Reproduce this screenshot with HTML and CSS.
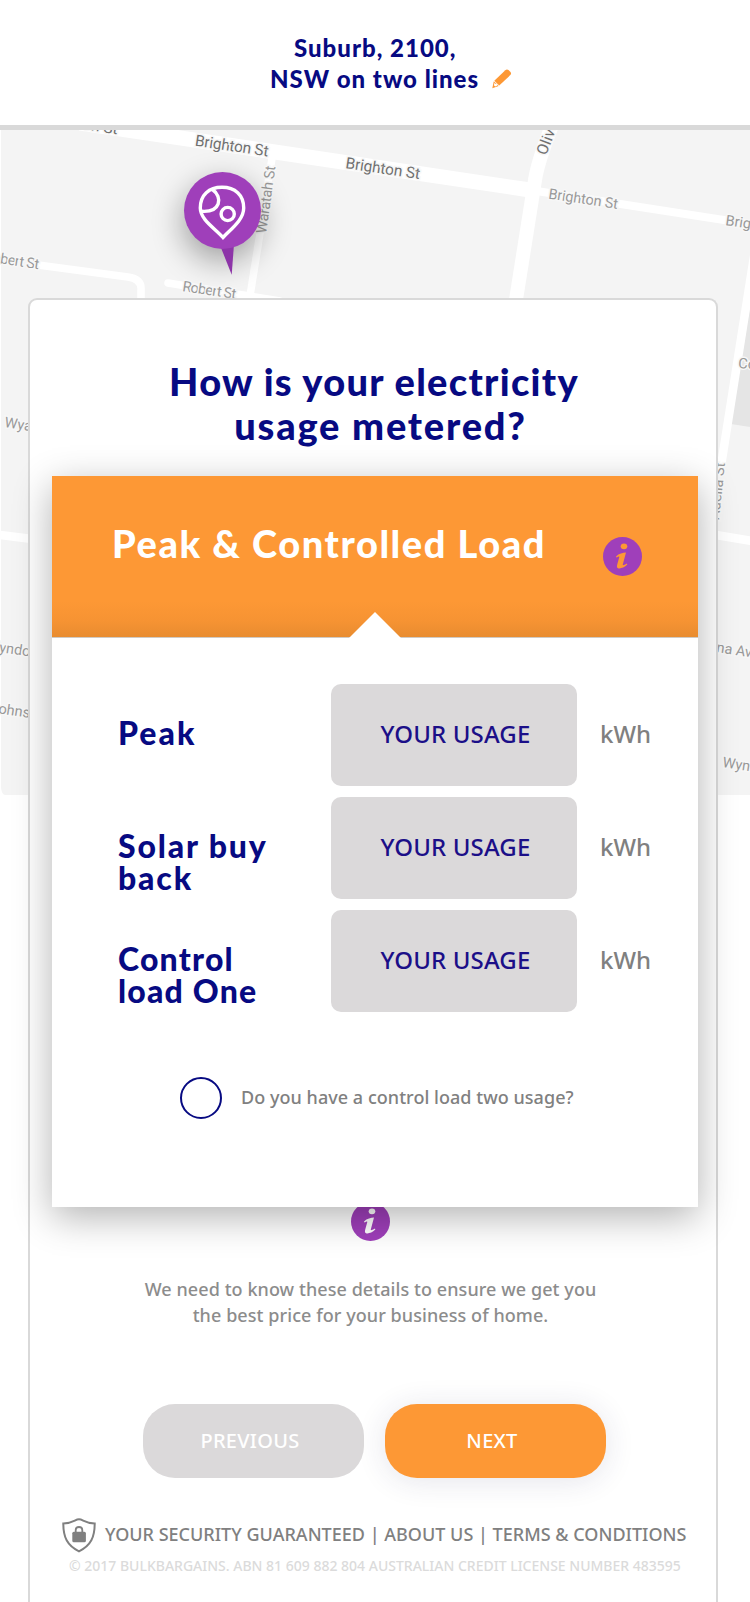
FILE: index.html
```html
<!DOCTYPE html>
<html lang="en">
<head>
<meta charset="utf-8">
<title>BulkBargains – Electricity usage</title>
<link rel="stylesheet" href="styles.css">
</head>
<body>
<div class="page">
  <header class="header">
    <p class="suburb"><span class="suburb-line one">Suburb, 2100,</span><span class="suburb-line two">NSW on two lines</span></p>
    <svg class="pencil" width="20" height="20" viewBox="0 0 20 20"><path fill="#fd9835" d="M13.300 1.200Q14.800-.200 16.500 1L18.500 3Q19.700 4.600 18.300 6.100L7.200 16.500 2.300 11.800Z"/><path fill="#fd9835" fill-rule="evenodd" d="M1.800 12.300 6.700 17.100.300 19.300ZM2.600 13.800 1.900 16.200 3.200 17.400 5.400 16.600 5 14.900 3.600 15Z"/></svg>
  </header>

  <svg class="map" width="750" height="665" viewBox="0 130 750 665">
    <path d="M1 130H750V795H5Q2 795 1 788Z" fill="#f4f4f4"/>
    <path d="M750 306V427L731 424Z" fill="#e5e5e5"/>
    <g fill="none" stroke="#fff">
      <path d="M80 123 530 190" stroke-width="15"/>
      <path d="M530 190 750 224" stroke-width="8"/>
      <path d="M555 118Q538 160 535 180L515 306" stroke-width="14" />
      <path d="M273 152 249 302M38 265 128 277Q142 279 141 290V302M168 283 280 301" stroke-width="7.500" stroke-linecap="round"/>
      <path d="M755 250 721 466M0 535 32 539M716 535 752 541" stroke-width="8.500"/>
    </g>
    <g class="street strong">
      <text transform="translate(82 129) rotate(8.500)">on St</text>
      <text transform="translate(194.500 145.500) rotate(8.500)" textLength="74">Brighton St</text>
      <text transform="translate(345 168) rotate(8.500)" textLength="75">Brighton St</text>
      <text transform="translate(546 156) rotate(-69)" textLength="35">Olive</text>
    </g>
    <g class="street">
      <text transform="translate(548 198.500) rotate(8.500)" textLength="70">Brighton St</text>
      <text transform="translate(725 225) rotate(8.500)">Brighton St</text>
      <text transform="translate(266 234) rotate(-82)" textLength="68">Waratah St</text>
      <text transform="translate(-16 261) rotate(8.500)" textLength="55">Robert St</text>
      <text transform="translate(182 291) rotate(8.500)" textLength="54">Robert St</text>
      <text transform="translate(4 427) rotate(8.500)">Wyatt Ave</text>
      <text transform="translate(-14 650) rotate(8.500)" textLength="84">Wyndora Ave</text>
      <text transform="translate(-10 712) rotate(8.500)">Johnson St</text>
      <text transform="translate(738 368) rotate(4)">Corner</text>
      <text transform="translate(725 463) rotate(-84)" text-anchor="end">Adelia St</text>
      <text transform="translate(716 652) rotate(8.500)">na Ave</text>
      <text transform="translate(722 767) rotate(8.500)">Wyndora</text>
    </g>
    <circle class="pin-shadow" cx="222" cy="222" r="39"/>
    <path d="M219.500 244H234L231.700 274.700Z" fill="#8d34a8"/>
    <circle cx="222.500" cy="210.500" r="38.500" fill="#9f3fba"/>
    <g fill="none" stroke="#fff" stroke-width="3.400">
      <path d="M223 237.500C216 229 200.300 220 200.300 208 200.300 195 209 187.300 222 187.300S243.700 195 243.700 208C243.700 220 231 229 223 237.500Z"/>
      <path d="M212.500 189.500C223 197 221 213 200.800 211.200"/>
      <circle cx="227.700" cy="214" r="6.600"/>
    </g>
  </svg>

  <main class="card">
    <h1 class="title"><span class="title-one">How is your electricity</span><br><span class="title-two">usage metered?</span></h1>

    <section class="panel">
      <div class="panel-head">
        <h2 class="panel-title">Peak &amp; Controlled Load</h2>
        <svg class="info" width="39" height="39" viewBox="0 0 39 39"><circle cx="19.500" cy="19.500" r="19.500" fill="#9f3fba"/><g fill="#fd9835"><ellipse cx="21" cy="9.300" rx="3.300" ry="2.900"/><path d="M13 19.500C16 16.500 20 15.500 23 15.500L19.800 27.500C19.500 29 21 28 24 26.600L24.300 27.600C21 31 17 31.900 15 31.200 13.300 30.500 14 28.500 14.500 26.500L16.300 20C16.500 18.800 15 19.800 13.500 20.500Z"/></g></svg>
        <span class="pointer"></span>
      </div>
      <div class="rows">
        <div class="row"><label class="name">Peak</label><div class="usage">YOUR USAGE</div><span class="unit">kWh</span></div>
        <div class="row"><label class="name solar">Solar buy<br>back</label><div class="usage">YOUR USAGE</div><span class="unit">kWh</span></div>
        <div class="row"><label class="name control">Control<br>load One</label><div class="usage">YOUR USAGE</div><span class="unit">kWh</span></div>
      </div>
      <div class="option"><span class="radio"></span><span class="question">Do you have a control load two usage?</span></div>
    </section>

    <svg class="info lower" width="39" height="39" viewBox="0 0 39 39"><circle cx="19.500" cy="19.500" r="19.500" fill="#9f3fba"/><g fill="#fff"><ellipse cx="21" cy="9.300" rx="3.300" ry="2.900"/><path d="M13 19.500C16 16.500 20 15.500 23 15.500L19.800 27.500C19.500 29 21 28 24 26.600L24.300 27.600C21 31 17 31.900 15 31.200 13.300 30.500 14 28.500 14.500 26.500L16.300 20C16.500 18.800 15 19.800 13.500 20.500Z"/></g></svg>

    <p class="note">We need to know these details to ensure we get you<br>the best price for your business of home.</p>

    <div class="actions">
      <button class="btn previous">PREVIOUS</button>
      <button class="btn next">NEXT</button>
    </div>

    <footer class="footer">
      <div class="links">
        <svg class="shield" width="34" height="35" viewBox="0 0 34 35"><path d="M17 1.300C13 1.300 11.500 5.300 1.300 5.500 1.300 19 5 27.500 17 33.300 29 27.500 32.700 19 32.700 5.500 22.500 5.300 21 1.300 17 1.300Z" fill="none" stroke="#808080" stroke-width="2"/><rect x="10.300" y="13.800" width="13.600" height="10.500" rx="1.500" fill="#808080"/><path d="M13.700 14V12Q13.700 9 17 9T20.300 12V14" fill="none" stroke="#808080" stroke-width="1.800"/></svg>
        <span class="links-text">YOUR SECURITY GUARANTEED | ABOUT US | TERMS &amp; CONDITIONS</span>
      </div>
      <p class="legal">© 2017 BULKBARGAINS. ABN 81 609 882 804 AUSTRALIAN CREDIT LICENSE NUMBER 483595</p>
    </footer>
  </main>
</div>
</body>
</html>
```
FILE: styles.css
```css
* { box-sizing: border-box; }
body, p, h1, h2 { margin: 0; }
body { background: #fff; font-family: "Noto Sans", "Open Sans", sans-serif; }
.page { position: relative; width: 750px; height: 1602px; overflow: hidden; }

.header {
  display: flex;
  height: 130px;
  padding: 32px 0 0 270px;
  border-bottom: 5px solid #d9d9d9;
}
.suburb { color: #070a82; font: 900 24px/31px "Lato", sans-serif; white-space: nowrap; width: 222px; }
.suburb-line { display: block; letter-spacing: 1px; }
.suburb-line.one { padding-left: 24px; }
.pencil { margin-top: 37px; }

.map { position: absolute; left: 0; top: 130px; }
.street { font-family: Roboto, sans-serif; font-size: 14.500px; fill: #999; stroke: #f7f7f7; stroke-width: 3px; paint-order: stroke; }
.street.strong { font-size: 15.500px; fill: #707070; }
.pin-shadow { fill: #000; opacity: .35; filter: blur(16px); }

.card {
  position: relative;
  width: 690px;
  height: 1310px;
  margin: 168px 0 0 28px;
  border: 2px solid #d9d9d9;
  border-bottom: 0;
  border-radius: 9px 9px 0 0;
  background: #fff;
}
.title {
  height: 176px;
  padding: 59px 0 0 2px;
  color: #070a82;
  font: 900 38px/44px "Lato", sans-serif;
  text-align: center;
  white-space: nowrap;
}
.title-one { letter-spacing: 1.3px; }
.title-two { padding-left: 13px; letter-spacing: 1.8px; }
.panel {
  position: relative;
  z-index: 1;
  width: 646px;
  height: 731px;
  margin-left: 22px;
  background: #fff;
  box-shadow: 0 10px 36px rgba(0, 0, 0, .3);
}
.panel-head {
  position: relative;
  display: flex;
  height: 162px;
  padding-left: 60px;
  border-bottom: 1px solid #cfcac4;
  background: linear-gradient(#fd9835 0, #fd9835 78%, #f69333 90%, #e88c30 100%);
}
.panel-title { width: 491px; padding-top: 43px; color: #fff; font: 900 38px/48px "Lato", sans-serif; letter-spacing: 1.55px; white-space: nowrap; }
.panel-head .info { margin-top: 61px; }
.pointer { position: absolute; left: 297px; bottom: -1px; width: 52px; height: 26px; background: #fff; clip-path: polygon(50% 0, 100% 100%, 0 100%); }

.rows { display: grid; gap: 11px; padding: 46px 0 0 66px; }
.row { display: grid; grid-template-columns: 213px 246px 80px; height: 102px; }
.name { padding-top: 33px; color: #070a82; font: 900 32px/32px "Lato", sans-serif; letter-spacing: 2px; white-space: nowrap; }
.name.solar { letter-spacing: 1.85px; }
.name.control { letter-spacing: 1.2px; }
.usage { padding-left: 3px; border-radius: 10px; background: #dbd9da; color: #1b0f88; font-size: 24px; font-weight: 500; line-height: 99px; text-align: center; letter-spacing: .15px; }
.unit { padding-left: 23px; color: #808080; font-size: 24px; font-weight: 500; line-height: 99px; }
.option { display: flex; align-items: center; gap: 19px; padding: 65px 0 0 128px; }
.radio { width: 42px; height: 42px; border: 2px solid #070a82; border-radius: 50%; }
.question { padding-bottom: 2px; color: #808080; font-size: 18px; font-weight: 500; line-height: 26px; letter-spacing: .04px; white-space: nowrap; }

.info { display: block; }
.info.lower { margin: -5px 0 0 321px; }
.note { width: 681px; padding-top: 35px; color: #8c8c8c; font-size: 18px; font-weight: 500; line-height: 26px; letter-spacing: .07px; text-align: center; }
.actions { display: flex; gap: 21px; padding: 76px 0 0 113px; }
.btn { width: 221px; height: 74px; padding: 0; border: 0; border-radius: 32px; color: #fff; font: 500 20px/72px "Noto Sans", sans-serif; letter-spacing: .3px; }
.previous { padding-right: 7px; background: #dbd9da; }
.next { padding-right: 7px; background: #fd9835; box-shadow: 0 3px 30px rgba(40, 40, 90, .12); }
.footer { padding: 40px 0 0 32px; white-space: nowrap; }
.links { display: flex; height: 36px; color: #808080; font-size: 18px; font-weight: 500; line-height: 32px; }
.links-text { padding-left: 9px; letter-spacing: .01px; }
.legal { padding: 1px 0 0 7px; color: #dbdbdb; font-size: 14px; font-weight: 500; line-height: 22px; }
```
